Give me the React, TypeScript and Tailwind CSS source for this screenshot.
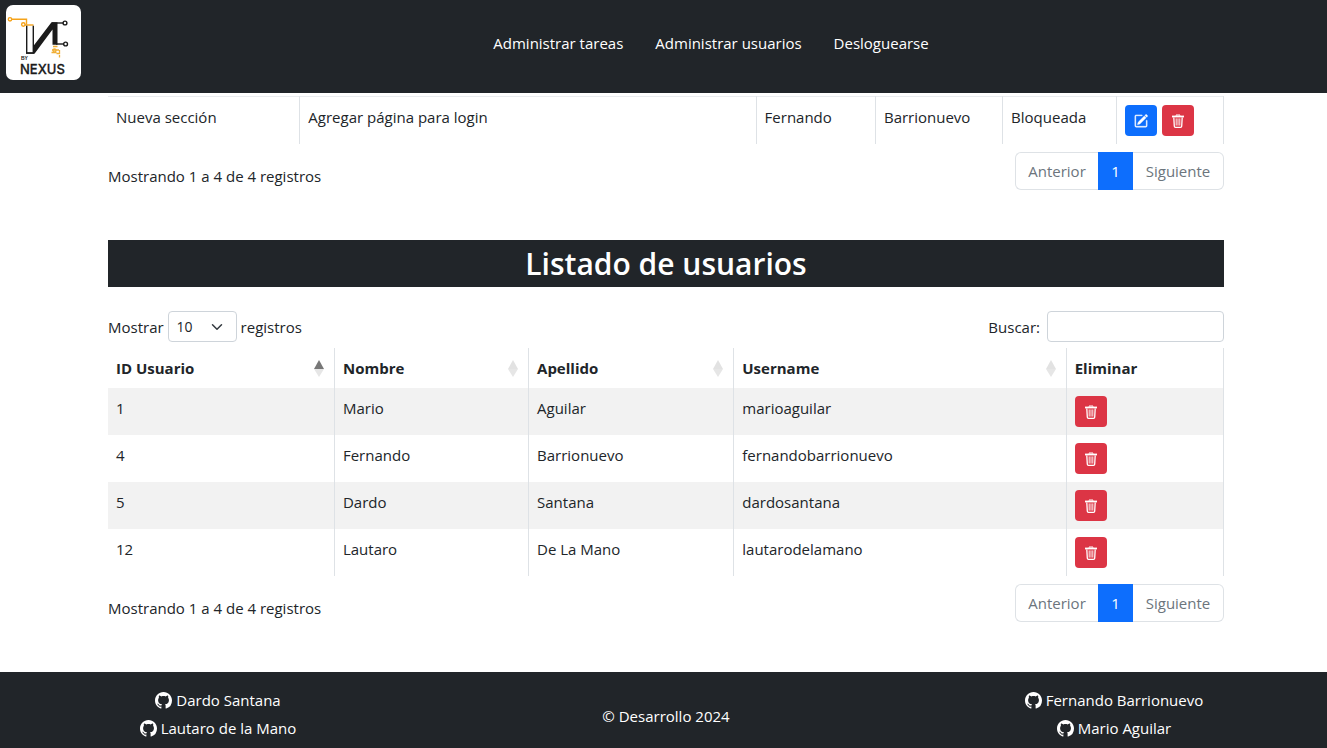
import React from "react";
import { BsPencilSquare, BsGithub } from "react-icons/bs";

function Logo() {
  return (
    <svg viewBox="0 0 75 75" className="block size-[75px]" role="img" aria-label="By Nexus">
      <rect width="75" height="75" rx="7" fill="#fff" />
      <g fill="none" stroke="#f5a31a" strokeWidth="1.4">
        <circle cx="4" cy="14.300" r="1.700" />
        <path d="M5.700 14.300H20.500V19.500" />
        <circle cx="17.300" cy="19.500" r="1.700" />
        <path d="M19 20h8.500" />
      </g>
      <g fill="none" stroke="#1b1b1b" strokeWidth="1.4">
        <path d="M20.700 20.700V48H28" />
        <path d="M27.300 20.700V48" />
        <path d="M46 18H57" />
        <circle cx="59" cy="18" r="1.900" />
        <path d="M50 39H57.700" />
        <circle cx="59.600" cy="39" r="1.900" />
      </g>
      <path d="M27 41.500L45.500 17.300H51.500V39.700H46.500V24.500L28.500 48.700H20V47.400H27Z" fill="#1b1b1b" />
      <g fill="none" stroke="#f0ae35" strokeWidth="1.3">
        <path d="M47 41.500h4.500M46 45h7M45.500 47.500h5M53.500 45v3.500h-3" />
        <circle cx="48.500" cy="45.500" r="1.500" />
        <path d="M53.500 50v2.500" />
      </g>
      <text x="15" y="55" fontSize="5" fontFamily="Liberation Sans, sans-serif" fontWeight="700" fill="#1b1b1b">BY</text>
      <text x="14" y="69" fontSize="13" fontFamily="Inter, sans-serif" fontWeight="500" fill="#1b1b1b" stroke="#1b1b1b" strokeWidth="0.300">NEXUS</text>
    </svg>
  );
}

const navItems = ["Administrar tareas", "Administrar usuarios", "Desloguearse"];

const users = [
  { id: 1, name: "Mario", surname: "Aguilar", username: "marioaguilar" },
  { id: 4, name: "Fernando", surname: "Barrionuevo", username: "fernandobarrionuevo" },
  { id: 5, name: "Dardo", surname: "Santana", username: "dardosantana" },
  { id: 12, name: "Lautaro", surname: "De La Mano", username: "lautarodelamano" },
];

const userColumns = [
  { label: "ID Usuario", width: "w-[20.3%]", sort: "asc" },
  { label: "Nombre", width: "w-[17.4%]", sort: "none" },
  { label: "Apellido", width: "w-[18.4%]", sort: "none" },
  { label: "Username", width: "w-[29.8%]", sort: "none" },
];

function TrashIcon() {
  return (
    <svg viewBox="0 0 14 14" className="size-3.5" fill="none" stroke="currentColor" aria-hidden="true">
      <path d="M5 1.600V1h4v.6" strokeWidth="1" />
      <path d="M1 2.500h12" strokeWidth="1.800" />
      <path d="M2.800 3.500l.5 8.600c.05.700.5 1.200 1.200 1.200h5c.7 0 1.150-.5 1.200-1.200l.5-8.600" strokeWidth="1.300" />
      <path d="M5.200 4.800v6.400M7 4.800v6.400M8.800 4.800v6.400" strokeWidth="0.900" strokeLinecap="round" />
    </svg>
  );
}

function DeleteButton({ label }: { label: string }) {
  return (
    <button type="button" aria-label={label} className="flex h-[31px] w-8 items-center justify-center rounded bg-[#dc3545] text-white">
      <TrashIcon />
    </button>
  );
}

function SortMark({ sort }: { sort: string }) {
  return (
    <svg viewBox="0 0 10 18" className="mt-0.5 mr-0.5 h-[18px] w-[10px] shrink-0" aria-hidden="true">
      <path d="M5 0L10 9H0Z" fill={sort === "asc" ? "#777" : "#e2e2e2"} />
      <path d="M5 17L10 9H0Z" fill="#e6e6e6" />
    </svg>
  );
}

function TableFooter() {
  return (
    <div className="mt-2 flex items-start justify-between">
      <p className="pt-3">Mostrando 1 a 4 de 4 registros</p>
      <nav aria-label="Paginación" className="flex h-[38px] text-[#6c757d]">
        <button type="button" className="w-[83px] rounded-l-md border border-r-0 border-[#dee2e6]">Anterior</button>
        <button type="button" aria-current="page" className="w-[35px] bg-[#0d6efd] text-white">1</button>
        <button type="button" className="w-[91px] rounded-r-md border border-l-0 border-[#dee2e6]">Siguiente</button>
      </nav>
    </div>
  );
}

function GithubLink({ name }: { name: string }) {
  return (
    <a href="#github" className="flex h-7 items-center gap-1">
      <BsGithub size={17} />
      {name}
    </a>
  );
}

export default function App() {
  return (
    <div className="min-h-screen bg-white font-['Open_Sans','Noto_Sans',sans-serif] text-[15px] leading-6 text-[#212529]">
      <header className="flex h-[93px] bg-[#212529] text-white">
        <a href="#inicio" className="pt-[5px] pl-1.5">
          <Logo />
        </a>
        <nav className="flex h-[85px] flex-1 items-center justify-center gap-8 pl-3.5">
          {navItems.map((item) => (
            <a key={item} href="#nav">{item}</a>
          ))}
        </nav>
      </header>

      <div className="pl-[5px]">
        <main className="mx-auto max-w-[1116px] pt-[3px]">
          <table className="w-full table-fixed">
            <tbody>
              <tr className="border-t border-[#e9ecef] align-top [&>td]:border-r [&>td]:border-r-[#dee2e6] [&>td]:p-2">
                <td className="w-[17.2%]">Nueva sección</td>
                <td className="w-[40.9%]">Agregar página para login</td>
                <td className="w-[10.7%]">Fernando</td>
                <td className="w-[11.4%]">Barrionuevo</td>
                <td className="w-[10.2%]">Bloqueada</td>
                <td>
                  <div className="flex gap-[5px]">
                    <button type="button" aria-label="Editar tarea" className="flex h-[31px] w-8 items-center justify-center rounded bg-[#0d6efd] text-white">
                      <BsPencilSquare size={14} strokeWidth={0.5} />
                    </button>
                    <DeleteButton label="Eliminar tarea" />
                  </div>
                </td>
              </tr>
            </tbody>
          </table>
          <TableFooter />

          <h2 className="mt-[50px] h-[47px] bg-[#212529] text-center text-[30px] leading-[48px] font-semibold text-white">Listado de usuarios</h2>

          <div className="mt-6 flex items-center justify-between">
            <label className="flex items-center gap-1">
              Mostrar
              <span className="grid items-center">
                <select defaultValue="10" className="col-start-1 row-start-1 h-[31px] w-[69px] appearance-none rounded border border-[#ced4da] bg-white pl-2 text-[14px] leading-5">
                  <option>10</option>
                  <option>25</option>
                  <option>50</option>
                  <option>100</option>
                </select>
                <svg viewBox="0 0 16 16" className="pointer-events-none col-start-1 row-start-1 mr-3.5 size-3 justify-self-end" fill="none" stroke="#343a40" strokeWidth="2" strokeLinecap="round" strokeLinejoin="round" aria-hidden="true">
                  <path d="m2 5 6 6 6-6" />
                </svg>
              </span>
              registros
            </label>
            <label className="flex items-center gap-[7px]">
              Buscar:
              <input type="search" className="h-[31px] w-[177px] rounded border border-[#ced4da] bg-white px-2 text-[14px]" />
            </label>
          </div>

          <table className="mt-1.5 w-full table-fixed text-left [&_td]:border-r [&_td]:border-[#dee2e6] [&_th]:border-r [&_th]:border-[#dee2e6]">
            <thead>
              <tr className="h-10">
                {userColumns.map((c) => (
                  <th key={c.label} className={`${c.width} px-2 font-bold`} aria-sort={c.sort === "asc" ? "ascending" : undefined}>
                    <span className="flex items-center justify-between">
                      {c.label}
                      <SortMark sort={c.sort} />
                    </span>
                  </th>
                ))}
                <th className="px-2 font-bold">Eliminar</th>
              </tr>
            </thead>
            <tbody>
              {users.map((u) => (
                <tr key={u.id} className="align-top odd:bg-[#f2f2f2] [&>td]:p-2">
                  <td>{u.id}</td>
                  <td>{u.name}</td>
                  <td>{u.surname}</td>
                  <td>{u.username}</td>
                  <td><DeleteButton label={`Eliminar ${u.username}`} /></td>
                </tr>
              ))}
            </tbody>
          </table>
          <TableFooter />
        </main>
      </div>

      <footer className="mt-[50px] h-[76px] bg-[#212529] pl-[5px] text-white">
        <div className="mx-auto flex max-w-[1116px] justify-between pt-3.5">
          <div className="flex w-[220px] flex-col items-center">
            <GithubLink name="Dardo Santana" />
            <GithubLink name="Lautaro de la Mano" />
          </div>
          <p className="pt-[18px]">© Desarrollo 2024</p>
          <div className="flex w-[220px] flex-col items-center">
            <GithubLink name="Fernando Barrionuevo" />
            <GithubLink name="Mario Aguilar" />
          </div>
        </div>
      </footer>
    </div>
  );
}
